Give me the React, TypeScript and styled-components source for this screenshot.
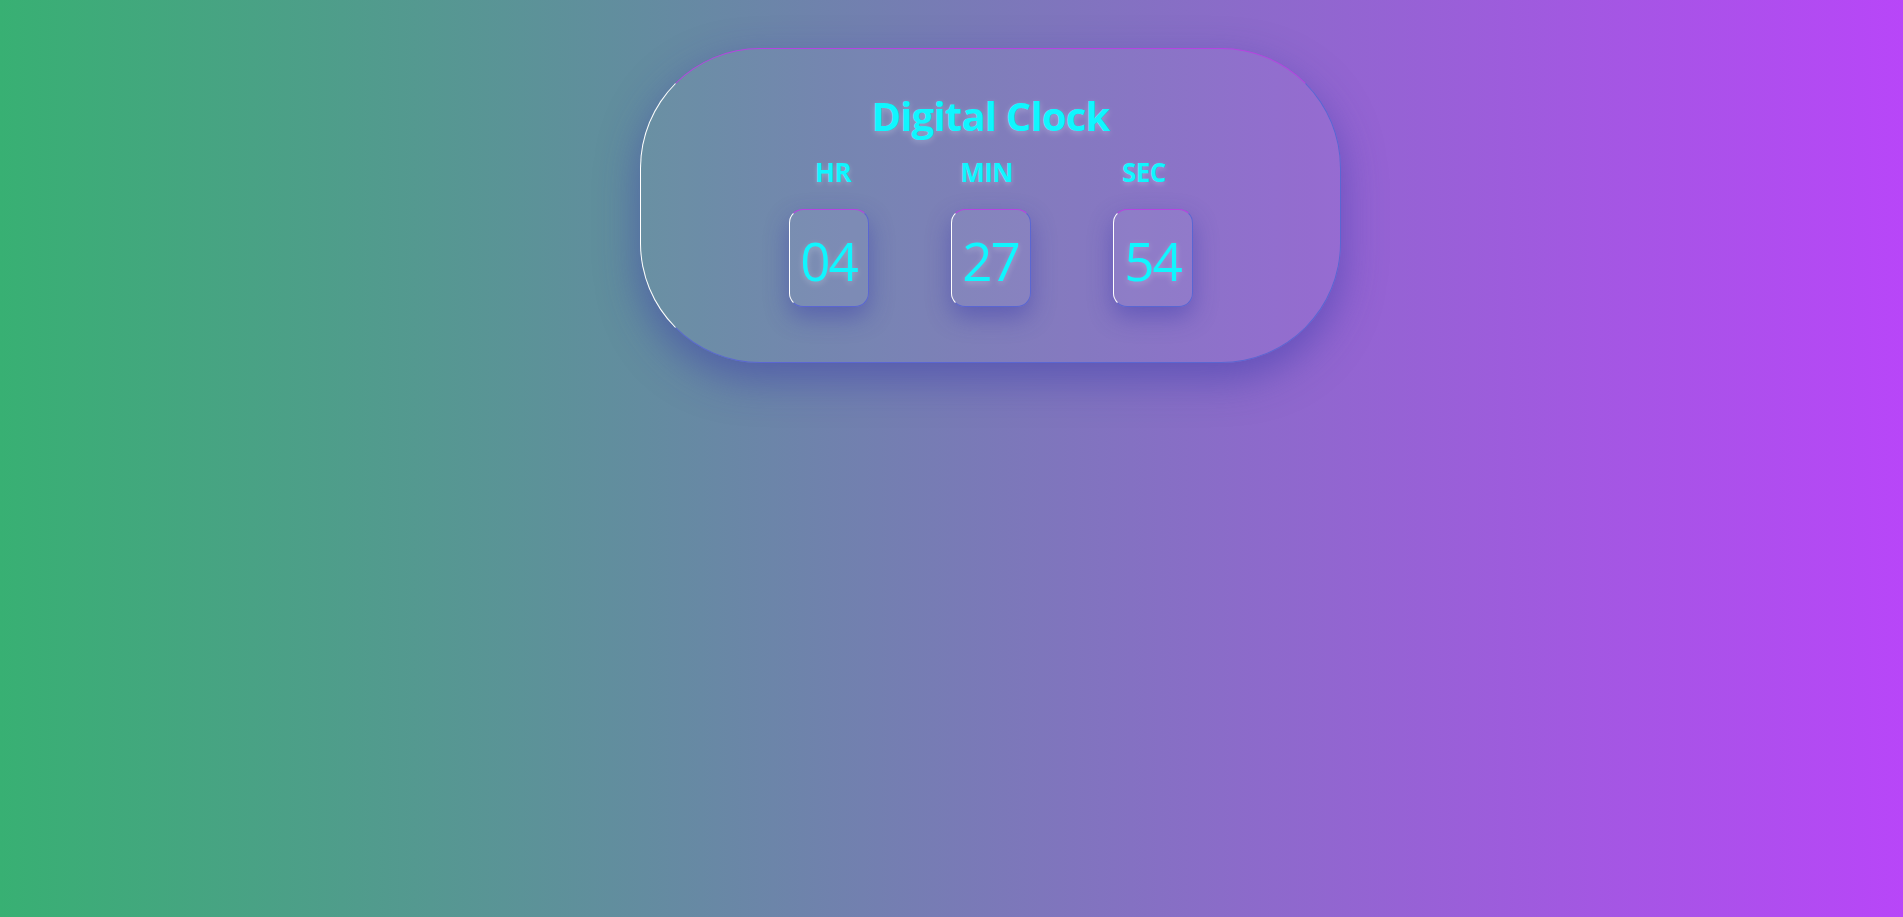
import React from "react";
import styled, { createGlobalStyle } from "styled-components";

const GlobalStyle = createGlobalStyle`
  * {
    box-sizing: border-box;
  }
  html,
  body {
    margin: 0;
    padding: 0;
  }
  body {
    min-height: 100vh;
    background: linear-gradient(to right, #38b073, #b846f8);
    font-family: "Open Sans", "Noto Sans", sans-serif;
  }
`;

const Page = styled.main`
  min-height: 100vh;
  display: flex;
  justify-content: center;
  align-items: flex-start;
  padding-top: 48px;
`;

const Card = styled.section`
  width: 701px;
  height: 315px;
  margin-left: 78px;
  display: flex;
  flex-direction: column;
  align-items: center;
  padding-top: 43px;
  border-radius: 120px;
  background: rgba(255, 255, 255, 0.04);
  border-top: 1px solid #b544e0;
  border-left: 1px solid #ffffff;
  border-right: 1px solid #5a66d2;
  border-bottom: 1px solid #5a66d2;
  box-shadow: 0 16px 40px rgba(55, 55, 170, 0.5);
`;

const Title = styled.h1`
  margin: 0;
  font-size: 40px;
  line-height: 48px;
  font-weight: 700;
  letter-spacing: -0.8px;
  color: #0ff6ff;
  text-shadow: 0 2px 6px rgba(255, 255, 255, 0.25);
`;

const Labels = styled.div`
  display: flex;
  gap: 109px;
  margin-top: 15px;
`;

const Label = styled.span`
  font-size: 26px;
  line-height: 34px;
  font-weight: 700;
  letter-spacing: -0.5px;
  color: #0ff6ff;
  text-shadow: 0 2px 5px rgba(255, 255, 255, 0.25);
`;

const Boxes = styled.div`
  display: flex;
  gap: 82px;
  margin-top: 20px;
`;

const DigitBox = styled.div`
  width: 80px;
  height: 98px;
  display: flex;
  align-items: center;
  justify-content: center;
  border-radius: 14px;
  background: rgba(255, 255, 255, 0.05);
  border-top: 1px solid #b544e0;
  border-left: 1px solid #ffffff;
  border-right: 1px solid #5a66d2;
  border-bottom: 1px solid #5a66d2;
  box-shadow: 0 10px 24px rgba(55, 55, 170, 0.45);
`;

const Digits = styled.span`
  font-size: 53px;
  line-height: 1;
  font-weight: 400;
  letter-spacing: -2px;
  color: #0ff6ff;
  text-shadow: 0 2px 6px rgba(255, 255, 255, 0.25);
  margin-top: 4px;
`;

const units = [
  { label: "HR", value: "04" },
  { label: "MIN", value: "27" },
  { label: "SEC", value: "54" },
];

export default function App() {
  return (
    <>
      <GlobalStyle />
      <Page>
        <Card>
          <Title>Digital Clock</Title>
          <Labels>
            {units.map((u) => (
              <Label key={u.label}>{u.label}</Label>
            ))}
          </Labels>
          <Boxes>
            {units.map((u) => (
              <DigitBox key={u.label}>
                <Digits>{u.value}</Digits>
              </DigitBox>
            ))}
          </Boxes>
        </Card>
      </Page>
    </>
  );
}
